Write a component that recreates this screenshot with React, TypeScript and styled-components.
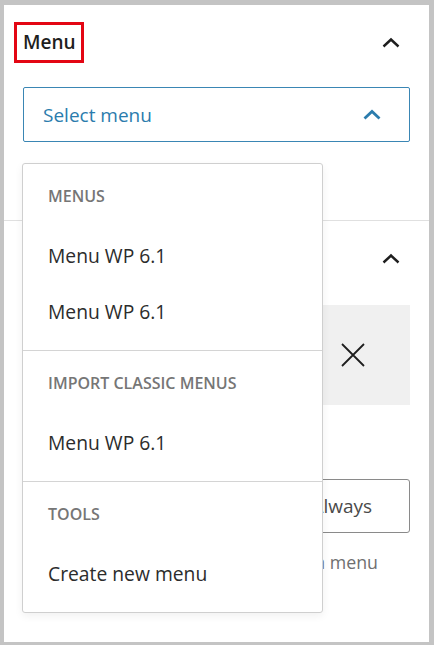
import React from 'react';
import styled, { createGlobalStyle } from 'styled-components';

const GlobalStyle = createGlobalStyle`
  html, body {
    margin: 0;
    padding: 0;
    background: #c4c4c4;
    font-family: "Open Sans", "Noto Sans", sans-serif;
  }
`;

const Frame = styled.div`
  width: 434px;
  height: 645px;
  box-sizing: border-box;
  padding: 5px 5px 3px 4px;
  background: #c4c4c4;
`;

const Panel = styled.div`
  position: relative;
  height: 100%;
  background: #fff;
  overflow: hidden;
`;

const Section = styled.div<{ $divider?: boolean }>`
  padding: 17px 19px 0 19px;
  border-bottom: ${(p) => (p.$divider ? '1px solid #e0e0e0' : 'none')};
`;

const Header = styled.div`
  display: flex;
  align-items: center;
  justify-content: space-between;
  height: 41px;
`;

const Title = styled.h2<{ $highlight?: boolean }>`
  margin: 0 0 0 -9px;
  padding: 6px 5px 6px 6px;
  border: 3px solid ${(p) => (p.$highlight ? '#e30613' : 'transparent')};
  font-size: 19px;
  line-height: 23px;
  font-weight: 600;
  color: #1e1e1e;
`;

const ToggleIcon = styled.span`
  display: flex;
  width: 18px;
  margin-right: 10px;
`;

const SelectBox = styled.div`
  margin-top: 24px;
  height: 55px;
  box-sizing: border-box;
  border: 1px solid #3a86b4;
  border-radius: 2px;
  display: flex;
  align-items: center;
  justify-content: space-between;
  padding: 0 28px 0 19px;
  font-size: 19px;
  color: #2b7cad;
`;

const Spacer = styled.div<{ $h: number }>`
  height: ${(p) => p.$h}px;
`;

const Preview = styled.div`
  margin-top: 26px;
  height: 100px;
  background: #f0f0f0;
  display: flex;
  align-items: center;
  justify-content: flex-end;
  padding-right: 44px;
`;

const Label = styled.div`
  margin-top: 24px;
  height: 22px;
  font-size: 15px;
  font-weight: 600;
  text-transform: uppercase;
  color: #1e1e1e;
`;

const ToggleGroup = styled.div`
  margin-top: 28px;
  height: 54px;
  box-sizing: border-box;
  border: 1px solid #8a8a8a;
  border-radius: 3px;
  display: flex;
`;

const ToggleOption = styled.div`
  flex: 1;
  display: flex;
  align-items: center;
  justify-content: center;
  padding-right: 6px;
  font-size: 19px;
  color: #4a4a4a;
`;

const Help = styled.p`
  margin: 16px 0 0;
  font-size: 17.75px;
  line-height: 26px;
  color: #6f6f6f;
`;

const Dropdown = styled.div`
  position: absolute;
  top: 158px;
  left: 18px;
  width: 301px;
  box-sizing: border-box;
  background: #fff;
  border: 1px solid #cfcfcf;
  border-radius: 3px;
  box-shadow: 0 3px 8px rgba(0, 0, 0, 0.06);
`;

const Group = styled.div`
  padding-bottom: 11px;
  & + & {
    border-top: 1px solid #d4d4d4;
  }
`;

const GroupHeading = styled.div`
  padding: 23px 0 22px 25px;
  font-size: 16px;
  line-height: 18px;
  font-weight: 600;
  text-transform: uppercase;
  color: #767676;
`;

const Item = styled.div`
  height: 56px;
  display: flex;
  align-items: center;
  padding-left: 25px;
  font-size: 19.3px;
  color: #2c2c2c;
`;

const Chevron = ({ color = '#1e1e1e', width = 2.4 }: { color?: string; width?: number }) => (
  <svg width="18" height="11" viewBox="0 0 18 11">
    <polyline points="1.5,9.5 9,2.5 16.5,9.5" fill="none" stroke={color} strokeWidth={width} />
  </svg>
);

const Close = () => (
  <svg width="26" height="26" viewBox="0 0 26 26">
    <path d="M2 2 L24 24 M24 2 L2 24" stroke="#1e1e1e" strokeWidth="1.8" fill="none" />
  </svg>
);

const groups = [
  { title: 'Menus', items: ['Menu WP 6.1', 'Menu WP 6.1'] },
  { title: 'Import Classic Menus', items: ['Menu WP 6.1'] },
  { title: 'Tools', items: ['Create new menu'] },
];

export default function App() {
  return (
    <>
      <GlobalStyle />
      <Frame>
        <Panel>
          <Section $divider>
            <Header>
              <Title $highlight>Menu</Title>
              <ToggleIcon>
                <Chevron />
              </ToggleIcon>
            </Header>
            <SelectBox>
              <span>Select menu</span>
              <Chevron color="#2b7cad" width={2.8} />
            </SelectBox>
            <Spacer $h={78} />
          </Section>
          <Section>
            <Header>
              <Title>Display</Title>
              <ToggleIcon>
                <Chevron />
              </ToggleIcon>
            </Header>
            <Preview>
              <Close />
            </Preview>
            <Label>Overlay Menu</Label>
            <ToggleGroup>
              <ToggleOption>Off</ToggleOption>
              <ToggleOption>Mobile</ToggleOption>
              <ToggleOption>Always</ToggleOption>
            </ToggleGroup>
            <Help>Collapses the navigation options in a menu icon opening an overlay.</Help>
          </Section>
          <Dropdown>
            {groups.map((g) => (
              <Group key={g.title}>
                <GroupHeading>{g.title}</GroupHeading>
                {g.items.map((it, i) => (
                  <Item key={i}>{it}</Item>
                ))}
              </Group>
            ))}
          </Dropdown>
        </Panel>
      </Frame>
    </>
  );
}
